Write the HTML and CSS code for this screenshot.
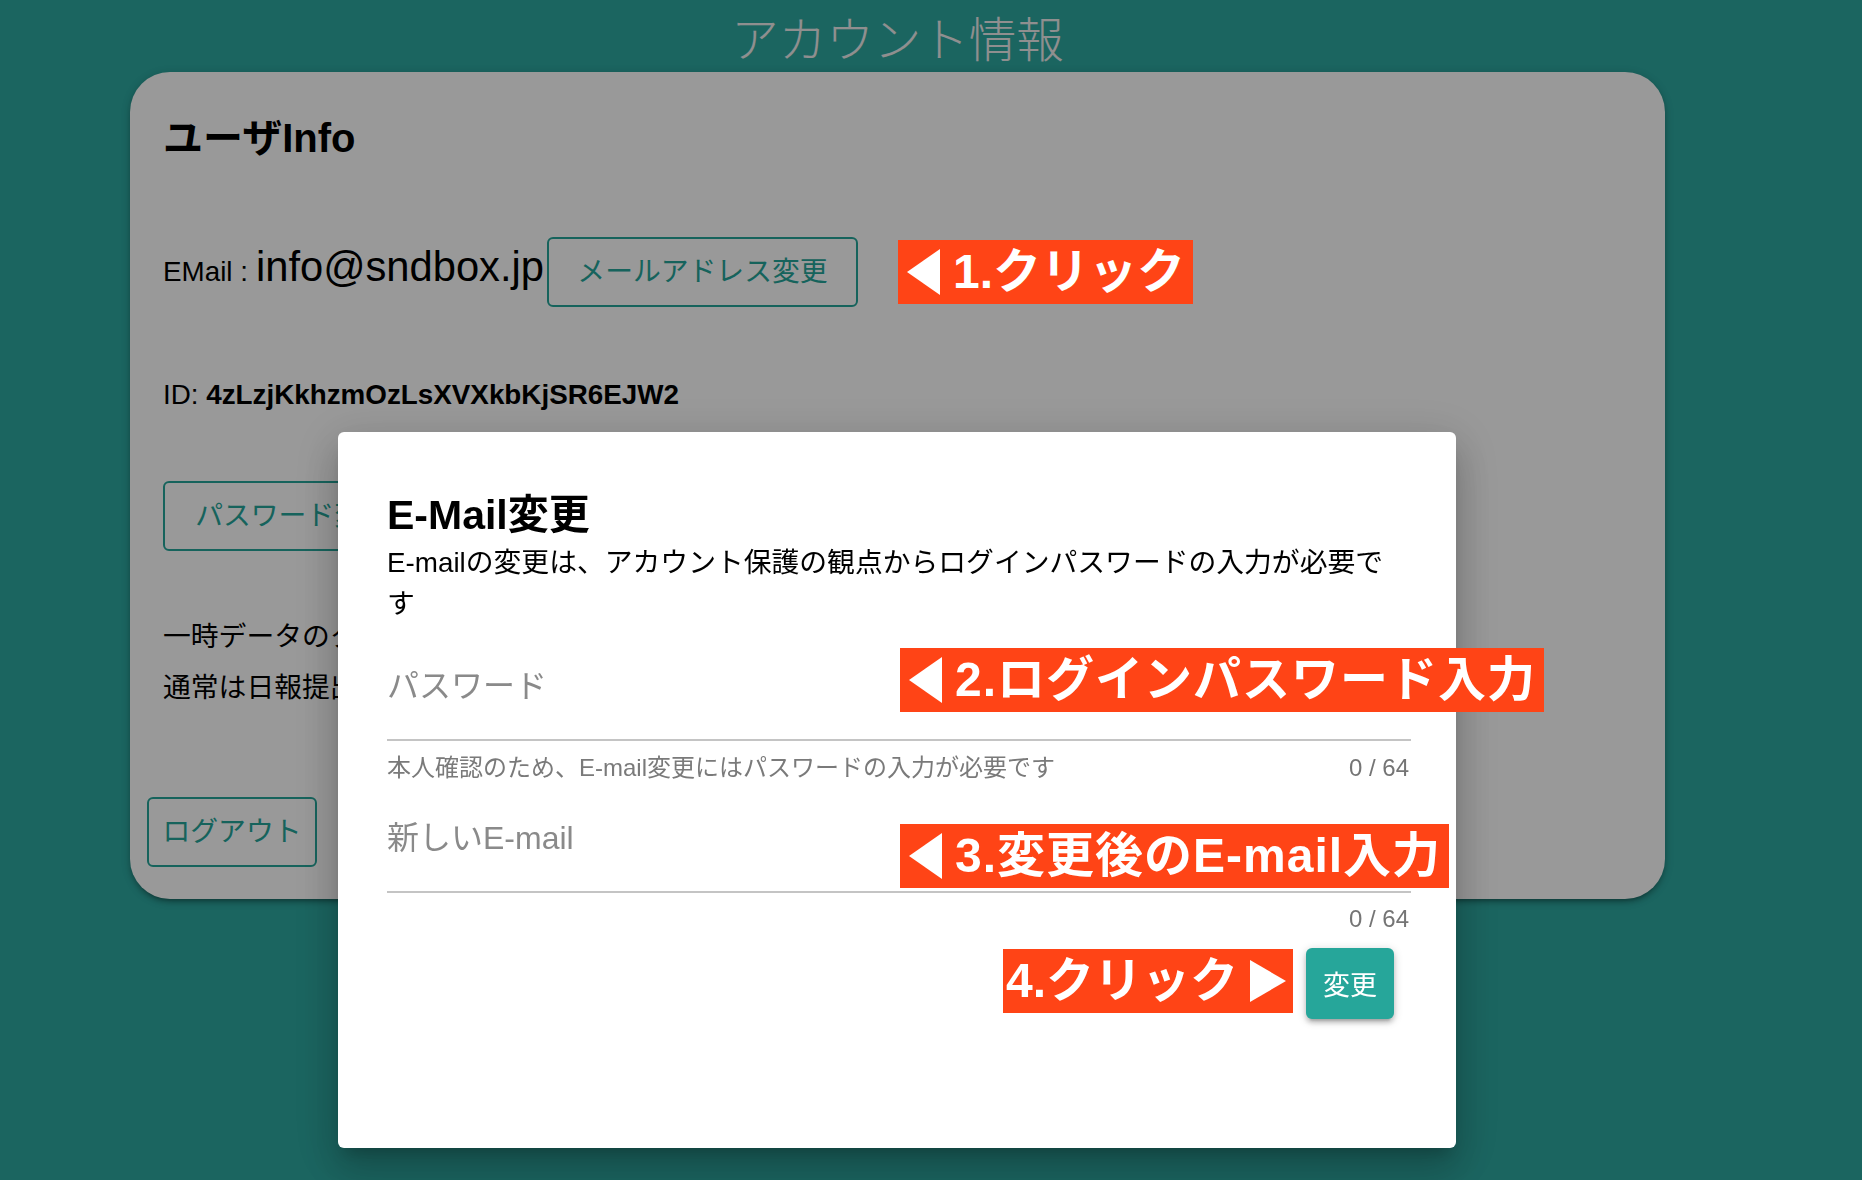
FILE: index.html
```html
<!DOCTYPE html>
<html lang="ja">
<head>
<meta charset="utf-8">
<title>アカウント情報</title>
<link rel="stylesheet" href="styles.css">
</head>
<body>
<main class="page">
  <h3 class="page-title">アカウント情報</h3>
  <section class="card">
    <h4 class="card-title">ユーザInfo</h4>
    <div class="email-row">
      <span class="email-label">EMail :</span>
      <span class="email-value">info@sndbox.jp</span>
      <button class="btn-outline btn-email">メールアドレス変更</button>
      <div class="note note-1">
        <svg class="tri" width="33" height="46" viewBox="0 0 33 46"><polygon points="33,0 33,46 0,23" fill="#fff"/></svg>
        <span>1.クリック</span>
      </div>
    </div>
    <p class="id-row">ID: <b>4zLzjKkhzmOzLsXVXkbKjSR6EJW2</b></p>
    <button class="btn-outline btn-password">パスワード変更</button>
    <p class="text-line first">一時データのクリア</p>
    <p class="text-line">通常は日報提出時に自動でクリアされます</p>
    <button class="btn-outline btn-logout">ログアウト</button>
  </section>
</main>

<div class="overlay"></div>

<div class="modal">
  <h4 class="modal-title">E-Mail変更</h4>
  <p class="modal-desc">E-mailの変更は、アカウント保護の観点からログインパスワードの入力が必要です</p>

  <div class="field">
    <input class="field-input" type="password" placeholder="パスワード">
    <div class="note note-2">
      <svg class="tri" width="33" height="46" viewBox="0 0 33 46"><polygon points="33,0 33,46 0,23" fill="#fff"/></svg>
      <span>2.ログインパスワード入力</span>
    </div>
  </div>
  <div class="helper">
    <span>本人確認のため、E-mail変更にはパスワードの入力が必要です</span>
    <span class="counter">0 / 64</span>
  </div>

  <div class="field field-2">
    <input class="field-input" type="email" placeholder="新しいE-mail">
    <div class="note note-3">
      <svg class="tri" width="33" height="46" viewBox="0 0 33 46"><polygon points="33,0 33,46 0,23" fill="#fff"/></svg>
      <span>3.変更後のE-mail入力</span>
    </div>
  </div>
  <div class="helper helper-2">
    <span></span>
    <span class="counter">0 / 64</span>
  </div>

  <div class="modal-footer">
    <div class="note note-4">
      <span>4.クリック</span>
      <svg class="tri" width="36" height="42" viewBox="0 0 36 42"><polygon points="0,0 0,42 36,21" fill="#fff"/></svg>
    </div>
    <button class="btn-submit">変更</button>
  </div>
</div>
</body>
</html>
```

FILE: styles.css
```css
* { box-sizing: border-box; }

html, body {
  margin: 0;
  padding: 0;
}

body {
  background: #2da8a0;
  font-family: "Liberation Sans", "Noto Sans CJK JP", sans-serif;
  color: #000;
  height: 1180px;
  overflow: hidden;
}

button {
  font-family: inherit;
  cursor: pointer;
}

.page {
  width: 1535px;
  margin-left: 130px;
}

.page-title {
  margin: 15px 0 5px;
  font-size: 47.5px;
  line-height: 52px;
  font-weight: 300;
  color: #eeeeee;
  text-align: center;
}

.card {
  background: #fff;
  border-radius: 40px;
  padding: 42px 33px 32px;
  box-shadow: 0 4px 4px 0 rgba(0,0,0,.14), 0 6px 2px -4px rgba(0,0,0,.12), 0 2px 10px 0 rgba(0,0,0,.2);
}

.card-title {
  margin: 0;
  font-size: 40px;
  line-height: 48px;
  font-weight: 700;
}

.email-row {
  display: flex;
  align-items: baseline;
  margin-top: 75px;
  height: 70px;
}

.email-label {
  font-size: 27.8px;
  margin-right: 8px;
}

.email-value {
  font-size: 41.7px;
}

.btn-outline {
  height: 70px;
  padding: 0;
  border: 2px solid #26a69a;
  border-radius: 6px;
  background: transparent;
  color: #26a69a;
  font-size: 27.8px;
  line-height: 66px;
  white-space: nowrap;
  text-align: center;
}

.btn-email {
  margin-left: 3px;
  width: 311px;
}

.note {
  display: flex;
  align-items: center;
  height: 64px;
  background: #ff4416;
  color: #fff;
  font-size: 48px;
  font-weight: 700;
  line-height: 64px;
  white-space: nowrap;
}

.note .tri { flex: none; }

.note-1, .note-2, .note-3 {
  padding: 0 8px 0 9px;
  gap: 13px;
}

.note-2, .note-3 { letter-spacing: 1px; }

.note-1 {
  position: relative;
  z-index: 12;
  align-self: center;
  margin-left: 40px;
}

.id-row {
  margin: 68px 0 0;
  font-size: 27.8px;
  line-height: 40px;
}

.btn-password {
  display: block;
  margin-top: 66px;
  width: 259px;
}

.text-line {
  margin: 11px 0 0;
  font-size: 27.8px;
  line-height: 40px;
}

.text-line.first { margin-top: 66px; }

.btn-logout {
  display: block;
  margin: 89px 0 0 -16px;
  width: 170px;
}

.overlay {
  position: fixed;
  inset: 0;
  background: rgba(0,0,0,.4);
  z-index: 10;
}

.modal {
  position: fixed;
  left: 338px;
  top: 432px;
  width: 1118px;
  height: 716px;
  background: #fff;
  border-radius: 6px;
  padding: 59px 45px 0 49px;
  z-index: 11;
  box-shadow: 0 24px 38px 3px rgba(0,0,0,.14), 0 9px 46px 8px rgba(0,0,0,.12), 0 11px 15px -7px rgba(0,0,0,.2);
}

.modal-title {
  margin: 0;
  font-size: 41px;
  line-height: 48px;
  font-weight: 700;
}

.modal-desc {
  margin: 3px 0 0;
  max-width: 1010px;
  font-size: 27.8px;
  line-height: 41px;
}

.field {
  position: relative;
  margin-top: 20px;
}

.field-2 { margin-top: 13px; }

.field-input {
  display: block;
  width: 100%;
  height: 97px;
  padding: 4px 0 15px;
  border: 0;
  border-bottom: 2px solid #c4c4c4;
  outline: none;
  background: transparent;
  font-family: inherit;
  font-size: 32px;
  color: #000;
}

.field-input::placeholder {
  color: #8a8a8a;
}

.note-2 {
  position: absolute;
  left: 513px;
  top: 4px;
}

.note-3 {
  position: absolute;
  left: 513px;
  top: 28px;
}

.helper {
  display: flex;
  justify-content: space-between;
  margin-top: 12px;
  font-size: 24px;
  line-height: 30px;
  color: #7a7a7a;
}

.helper-2 { margin-top: 11px; }

.counter {
  padding-right: 2px;
  color: #757575;
}

.modal-footer {
  display: flex;
  justify-content: flex-end;
  align-items: flex-start;
  gap: 13px;
  margin-top: 14px;
  padding-right: 17px;
}

.note-4 {
  margin-top: 1px;
  padding: 0 7px 0 3px;
  gap: 12px;
}

.btn-submit {
  width: 88px;
  height: 71px;
  border: 0;
  border-radius: 6px;
  background: #26a69a;
  color: #fff;
  font-size: 27px;
  box-shadow: 0 4px 4px 0 rgba(0,0,0,.14), 0 6px 2px -4px rgba(0,0,0,.12), 0 2px 10px 0 rgba(0,0,0,.2);
}
```
